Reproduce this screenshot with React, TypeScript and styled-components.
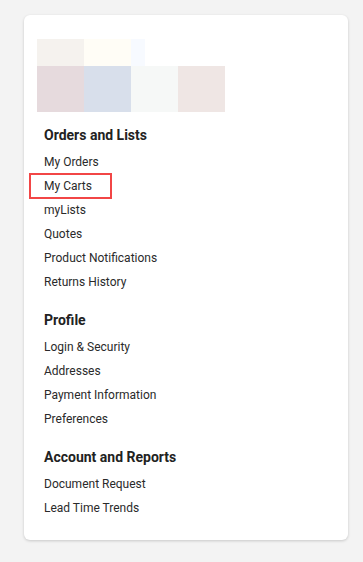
import styled, { createGlobalStyle } from "styled-components";

const GlobalStyle = createGlobalStyle`
  html, body {
    margin: 0;
    padding: 0;
    background: #f3f3f3;
  }
  body {
    font-family: Roboto, "Liberation Sans", Arial, sans-serif;
    color: #222;
  }
`;

const Page = styled.div`
  padding: 15px 15px 22px 24px;
`;

const Card = styled.div`
  width: 324px;
  box-sizing: border-box;
  background: #fff;
  border-radius: 6px;
  box-shadow: 0 1px 3px rgba(0, 0, 0, 0.18);
  padding: 24px 13px 20px;
`;

const Logo = styled.div`
  display: grid;
  grid-template-columns: repeat(4, 47px);
  grid-template-rows: 27px 46px;
  margin-bottom: 12px;
`;

const Tile = styled.div<{ $color: string; $w?: number }>`
  background: ${(p) => p.$color};
  width: ${(p) => (p.$w ? `${p.$w}px` : "auto")};
`;

const Section = styled.div`
  padding-left: 7px;
  margin-bottom: 15px;
  &:last-child {
    margin-bottom: 0;
  }
`;

const Heading = styled.h3`
  margin: 0 0 4px;
  font-size: 14px;
  font-weight: 700;
  line-height: 22px;
  color: #222;
`;

const List = styled.ul`
  list-style: none;
  margin: 0;
  padding: 0;
`;

const Item = styled.li<{ $highlight?: boolean }>`
  font-size: 12px;
  line-height: 24px;
  color: #2a2a2a;
  position: relative;
  ${(p) =>
    p.$highlight &&
    `
    &::after {
      content: "";
      position: absolute;
      left: -15px;
      top: -1px;
      width: 83px;
      height: 26px;
      box-sizing: border-box;
      border: 2.5px solid #f24646;
    }
  `}
`;

const sections = [
  {
    title: "Orders and Lists",
    items: ["My Orders", "My Carts", "myLists", "Quotes", "Product Notifications", "Returns History"],
  },
  {
    title: "Profile",
    items: ["Login & Security", "Addresses", "Payment Information", "Preferences"],
  },
  {
    title: "Account and Reports",
    items: ["Document Request", "Lead Time Trends"],
  },
];

export default function App() {
  return (
    <Page>
      <GlobalStyle />
      <Card>
        <Logo>
          <Tile $color="#f5f2ee" />
          <Tile $color="#fffdf6" />
          <Tile $color="#f7faff" $w={14} />
          <div />
          <Tile $color="#e6dadd" />
          <Tile $color="#d8dfeb" />
          <Tile $color="#f6f8f7" />
          <Tile $color="#efe6e4" />
        </Logo>
        {sections.map((s) => (
          <Section key={s.title}>
            <Heading>{s.title}</Heading>
            <List>
              {s.items.map((it) => (
                <Item key={it} $highlight={it === "My Carts"}>
                  {it}
                </Item>
              ))}
            </List>
          </Section>
        ))}
      </Card>
    </Page>
  );
}
